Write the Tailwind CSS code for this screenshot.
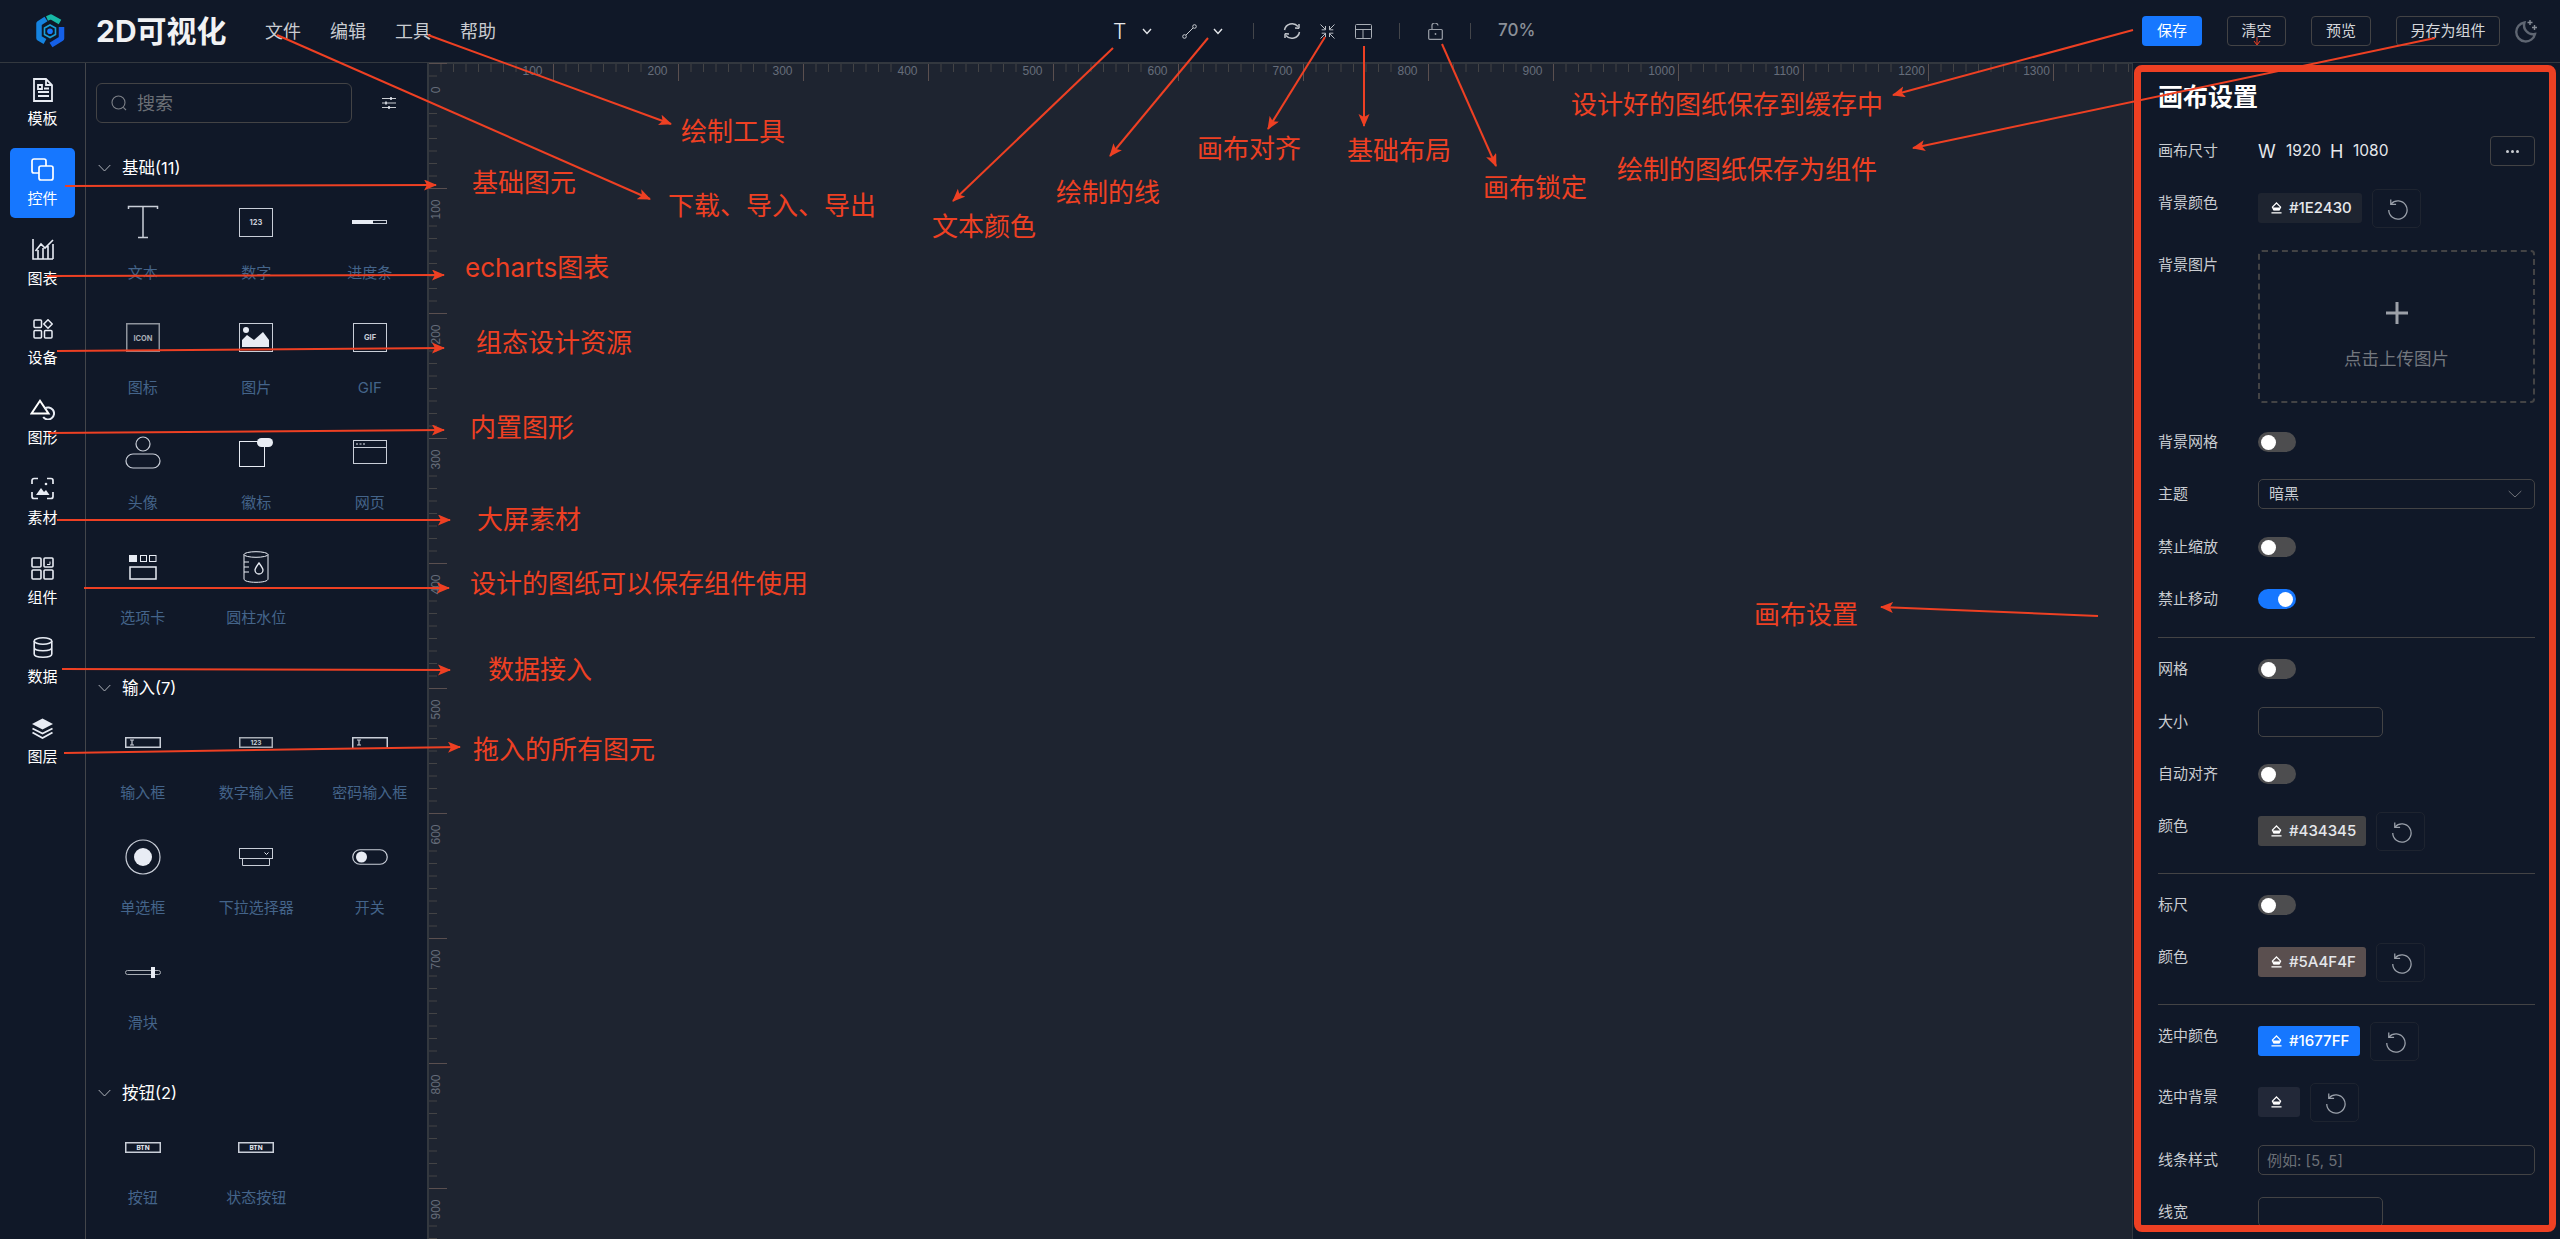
<!DOCTYPE html>
<html lang="zh-CN">
<head>
  <meta charset="UTF-8" />
  <title>2D可视化</title>
  <script src="https://cdn.jsdelivr.net/npm/@tailwindcss/browser@4"></script>
</head>
<body class="relative h-screen overflow-hidden bg-[#101828] text-white font-['Inter','Noto_Sans_CJK_SC',sans-serif]">

<!-- shared icons -->
<svg class="absolute w-0 h-0">
  <symbol id="bucket" viewBox="0 0 12 13">
    <path d="M6 1L10.500 5.500L9 8.500H3L1.500 5.500Z" fill="none" stroke="#fff" stroke-width="1.300"/>
    <path d="M2 6H10L9 9H3Z" fill="#fff"/>
    <path d="M0.500 11.800H11.500" stroke="#fff" stroke-width="1.400"/>
  </symbol>
  <symbol id="reset" viewBox="0 0 24 24">
    <path d="M5.500 6.500A10 10 0 1 1 3 13" fill="none" stroke="#9aa0aa" stroke-width="1.400"/>
    <path d="M5.200 1.500V7H11" fill="none" stroke="#9aa0aa" stroke-width="1.400"/>
  </symbol>
</svg>

<!-- HEADER -->
<header class="h-[63px] border-b border-[#33383f] flex items-center">
  <svg class="ml-[35px] w-[30px] h-[34px]" viewBox="0 0 30 34">
    <path d="M11 5L4 9.500V24L10 27.500" fill="none" stroke="#1583e0" stroke-width="5.500" stroke-linejoin="round"/>
    <path d="M12 4.500L16 2.800L25 8" fill="none" stroke="#17b8a6" stroke-width="5" stroke-linejoin="round"/>
    <path d="M26.500 13V24.500L16 31" fill="none" stroke="#1560e8" stroke-width="5.500" stroke-linejoin="round"/>
    <path d="M15 11L20.500 14V20.500L15 23.500L9.500 20.500V14Z" fill="#101828" stroke="#1a9fd8" stroke-width="1.600"/>
    <circle cx="15" cy="17.300" r="2.800" fill="#1677FF"/>
  </svg>
  <div class="ml-[31px] w-[135px] text-[30px] font-bold leading-none text-[#f1f2f4]">2D可视化</div>
  <nav class="ml-[34px] flex gap-[29px] text-[18px] text-[#c9ccd1]">
    <a>文件</a><a>编辑</a><a>工具</a><a>帮助</a>
  </nav>

  <!-- toolbar -->
  <div class="ml-[617px] flex items-center h-[16px]">
    <span class="w-[12px] text-[21px] font-light leading-none text-[#e5e7eb]">T</span>
    <svg class="ml-[17px] w-[10px] h-[7px]" viewBox="0 0 10 7"><path d="M1 1L5 5.500L9 1" fill="none" stroke="#e5e7eb" stroke-width="1.400"/></svg>
    <svg class="ml-[30px] w-[15px] h-[15px]" viewBox="0 0 15 15"><circle cx="2.500" cy="12.500" r="1.800" fill="none" stroke="#c9ccd1"/><circle cx="12.500" cy="2.500" r="1.800" fill="none" stroke="#c9ccd1"/><path d="M4 11L11 4" stroke="#c9ccd1"/></svg>
    <svg class="ml-[16px] w-[10px] h-[7px]" viewBox="0 0 10 7"><path d="M1 1L5 5.500L9 1" fill="none" stroke="#e5e7eb" stroke-width="1.400"/></svg>
    <div class="ml-[30px] w-px h-[16px] bg-[#43454a]"></div>
    <svg class="ml-[29px] w-[18px] h-[18px]" viewBox="0 0 18 18"><path d="M1.500 8A7.700 7.700 0 0 1 15 4.500M16.500 10A7.700 7.700 0 0 1 3 13.500" fill="none" stroke="#c2c6cc" stroke-width="1.500"/><path d="M16 2V6H12L16 6.500ZM2 16V12H6L2 11.500Z" fill="#c2c6cc" stroke="#c2c6cc"/></svg>
    <svg class="ml-[19px] w-[15px] h-[15px]" viewBox="0 0 15 15"><path d="M0.500 0.500L5.500 5.500M5.500 2V5.800H1.700M14.500 0.500L9.500 5.500M9.500 2V5.800H13.300M0.500 14.500L5.500 9.500M5.500 13V9.200H1.700M14.500 14.500L9.500 9.500M9.500 13V9.200H13.300" fill="none" stroke="#b8bcc3"/></svg>
    <svg class="ml-[20px] w-[17px] h-[15px]" viewBox="0 0 17 15"><rect x="0.500" y="0.500" width="16" height="14" rx="1" fill="none" stroke="#a8adb5"/><path d="M0.500 5.500H16.500M8 5.500V14.500" stroke="#a8adb5"/></svg>
    <div class="ml-[27px] w-px h-[16px] bg-[#43454a]"></div>
    <svg class="ml-[28px] w-[15px] h-[17px]" viewBox="0 0 15 17"><rect x="0.700" y="6.500" width="13.600" height="9.800" rx="1" fill="none" stroke="#9a9fa8" stroke-width="1.200"/><path d="M4 6.500V3.500A3 3 0 0 1 10 2.500" fill="none" stroke="#9a9fa8" stroke-width="1.200"/><circle cx="7.500" cy="11" r="0.900" fill="#9a9fa8"/></svg>
    <div class="ml-[27px] w-px h-[16px] bg-[#43454a]"></div>
    <span class="ml-[27px] text-[17px] font-medium text-[#8b9098]">70%</span>
  </div>

  <!-- actions -->
  <div class="absolute left-[2142px] top-[16px] flex items-center h-[30px] text-[15px] text-[#d5d7db]">
    <button class="w-[60px] h-[30px] rounded-[4px] bg-[#1677FF] text-white">保存</button>
    <button class="ml-[25px] w-[59px] h-[30px] rounded-[4px] border border-[#434345]">清空</button>
    <button class="ml-[25px] w-[60px] h-[30px] rounded-[4px] border border-[#434345]">预览</button>
    <button class="ml-[25px] w-[104px] h-[30px] rounded-[4px] border border-[#434345]">另存为组件</button>
    <svg class="ml-[14px] w-[24px] h-[24px]" viewBox="0 0 24 24"><path d="M10.500 3.500A9.500 9.500 0 1 0 21 15A9 9 0 0 1 10.500 3.500Z" fill="none" stroke="#5f6672" stroke-width="2.400"/><path d="M16 1V6M13.500 3.500H18.500M20.500 6V11M18 8.500H23" stroke="#868c96" stroke-width="1.400"/></svg>
  </div>
</header>

<main class="flex h-[1176px]">
  <!-- LEFT RAIL -->
  <aside class="w-[86px] shrink-0 border-r border-[#43454a] pt-[5px] flex flex-col gap-[9.75px] items-center text-[15px] text-white">
    <a class="w-[65px] h-[70px] flex flex-col items-center">
      <div class="h-[41px] pt-[2px] flex items-center"><svg class="w-[22px] h-[24px]" viewBox="0 0 22 24"><path d="M2 1H14L20 7V23H2Z M14 1V7H20" fill="none" stroke="#e8ecf4" stroke-width="1.800"/><path d="M6 7H10V11H6ZM6 14H17M6 18H17M12 10.500H17" fill="none" stroke="#e8ecf4" stroke-width="1.800"/></svg></div>
      <span class="leading-[20px]">模板</span>
    </a>
    <a class="w-[65px] h-[70px] rounded-[5px] bg-[#1677FF] flex flex-col items-center">
      <div class="h-[41px] pt-[2px] flex items-center"><svg class="w-[23px] h-[23px]" viewBox="0 0 23 23"><path d="M8 15H3A2 2 0 0 1 1 13V3A2 2 0 0 1 3 1H13A2 2 0 0 1 15 3V8" fill="none" stroke="#fff" stroke-width="1.700"/><path d="M10 8H20A2 2 0 0 1 22 10V20A2 2 0 0 1 20 22H10A2 2 0 0 1 8 20V10A2 2 0 0 1 10 8Z" fill="none" stroke="#fff" stroke-width="1.700"/></svg></div>
      <span class="leading-[20px]">控件</span>
    </a>
    <a class="w-[65px] h-[70px] flex flex-col items-center">
      <div class="h-[41px] pt-[2px] flex items-center"><svg class="w-[22px] h-[22px]" viewBox="0 0 22 22"><path d="M1 1V21H21M6 21V12M11 21V10M16 21V8M21 21V6M3.500 13L9 6L13 10L21 2" fill="none" stroke="#e8ecf4" stroke-width="1.600"/></svg></div>
      <span class="leading-[20px]">图表</span>
    </a>
    <a class="w-[65px] h-[70px] flex flex-col items-center">
      <div class="h-[41px] pt-[2px] flex items-center"><svg class="w-[20px] h-[20px]" viewBox="0 0 20 20"><rect x="1" y="1" width="7.500" height="7.500" rx="1" fill="none" stroke="#e8ecf4" stroke-width="1.500"/><path d="M15 0.800L19.200 5L15 9.200L10.800 5Z" fill="none" stroke="#e8ecf4" stroke-width="1.500"/><rect x="1" y="11.500" width="7.500" height="7.500" rx="1" fill="none" stroke="#e8ecf4" stroke-width="1.500"/><rect x="11.500" y="11.500" width="7.500" height="7.500" rx="1" fill="none" stroke="#e8ecf4" stroke-width="1.500"/></svg></div>
      <span class="leading-[20px]">设备</span>
    </a>
    <a class="w-[65px] h-[70px] flex flex-col items-center">
      <div class="h-[41px] pt-[3px] flex items-center"><svg class="w-[25px] h-[21px]" viewBox="0 0 25 21"><path d="M10 1.800L18.500 14.500H1.500Z" fill="none" stroke="#fff" stroke-width="2"/><path d="M14.500 9.600A6 6 0 1 1 13.200 18" fill="none" stroke="#e8ecf4" stroke-width="2"/></svg></div>
      <span class="leading-[20px]">图形</span>
    </a>
    <a class="w-[65px] h-[70px] flex flex-col items-center">
      <div class="h-[41px] pt-[2px] flex items-center"><svg class="w-[23px] h-[23px]" viewBox="0 0 23 23"><path d="M7 1.500H3A2 2 0 0 0 1 3.500V7M16 1.500H20A2 2 0 0 1 22 3.500V7M1 15V19.500A2 2 0 0 0 3 21.500H7M16 21.500H20A2 2 0 0 0 22 19.500V15" fill="none" stroke="#e8ecf4" stroke-width="1.700"/><path d="M5 18L10 11L13 15L15 13L18.500 18Z" fill="#e8ecf4"/><circle cx="15" cy="7" r="1.300" fill="#e8ecf4"/></svg></div>
      <span class="leading-[20px]">素材</span>
    </a>
    <a class="w-[65px] h-[70px] flex flex-col items-center">
      <div class="h-[41px] pt-[2px] flex items-center"><svg class="w-[23px] h-[23px]" viewBox="0 0 23 23"><rect x="1" y="1" width="9" height="9" rx="1" fill="none" stroke="#e8ecf4" stroke-width="1.600"/><rect x="13" y="1" width="9" height="9" rx="1" fill="none" stroke="#e8ecf4" stroke-width="1.600"/><rect x="1" y="13" width="9" height="9" rx="1" fill="none" stroke="#e8ecf4" stroke-width="1.600"/><rect x="13" y="13" width="9" height="9" rx="1" fill="none" stroke="#e8ecf4" stroke-width="1.600"/><path d="M16 7.500H19V4.500" fill="none" stroke="#e8ecf4"/></svg></div>
      <span class="leading-[20px]">组件</span>
    </a>
    <a class="w-[65px] h-[70px] flex flex-col items-center">
      <div class="h-[41px] pt-[2px] flex items-center"><svg class="w-[20px] h-[21px]" viewBox="0 0 20 21"><ellipse cx="10" cy="4" rx="8.800" ry="3.200" fill="none" stroke="#e8ecf4" stroke-width="1.600"/><path d="M1.200 4V17C1.200 19 5 20.200 10 20.200S18.800 19 18.800 17V4M1.200 10.500C1.200 12.500 5 13.700 10 13.700S18.800 12.500 18.800 10.500" fill="none" stroke="#e8ecf4" stroke-width="1.600"/></svg></div>
      <span class="leading-[20px]">数据</span>
    </a>
    <a class="w-[65px] h-[70px] flex flex-col items-center">
      <div class="h-[41px] pt-[3px] flex items-center"><svg class="w-[23px] h-[21px]" viewBox="0 0 23 21"><path d="M11.500 0.500L22 6L11.500 11.500L1 6Z" fill="#e8ecf4"/><path d="M1.500 10.500L11.500 15.500L21.500 10.500M1.500 14.500L11.500 20L21.500 14.500" fill="none" stroke="#e8ecf4" stroke-width="1.800"/></svg></div>
      <span class="leading-[20px]">图层</span>
    </a>
  </aside>

  <!-- COMPONENT PANEL -->
  <section class="w-[342px] shrink-0 border-r border-[#33383f] overflow-hidden">
    <div class="pl-[10px] pt-[20px] flex items-center">
      <div class="w-[256px] h-[40px] rounded-[6px] border border-[#434345] flex items-center pl-[14px] text-[18px] text-[#6b6f76]">
        <svg class="w-[16px] h-[16px]" viewBox="0 0 16 16"><circle cx="7.500" cy="7.500" r="6.500" fill="none" stroke="#7d8188" stroke-width="1.100"/><path d="M12.300 12.300L15 15" stroke="#7d8188" stroke-width="1.100"/></svg>
        <span class="ml-[10px]">搜索</span>
      </div>
      <svg class="ml-[30px] w-[14px] h-[14px]" viewBox="0 0 14 14"><path d="M0 2.500H14M0 7H14M0 11.500H14" stroke="#c9ccd1"/><path d="M9 1V4M4 5.500V8.500M7 10V13" stroke="#e8ecf4" stroke-width="1.500"/></svg>
    </div>

    <!-- 基础 -->
    <div class="mt-[30px] h-[30px] flex items-center pl-[12px] text-[16.5px] text-white">
      <svg class="w-[13px] h-[8px]" viewBox="0 0 13 8"><path d="M0.700 1L6.500 7L12.300 1" fill="none" stroke="#aeb2b9"/></svg>
      <span class="ml-[11px]">基础(11)</span>
    </div>
    <div class="grid grid-cols-[repeat(3,113.5px)] text-[15px] text-[#44648a]">
      <div class="h-[115px] pt-[11px] flex flex-col items-center">
        <div class="h-[56px] flex items-center"><svg class="w-[32px] h-[34px]" viewBox="0 0 32 34"><path d="M1.500 4V1.500H30.500V4M16 1.500V32.500M11 32.500H21" fill="none" stroke="#c9ced8" stroke-width="1.500"/></svg></div>
        <span class="mt-[13px] leading-[20px]">文本</span>
      </div>
      <div class="h-[115px] pt-[11px] flex flex-col items-center">
        <div class="h-[56px] flex items-center"><svg class="w-[34px] h-[29px]" viewBox="0 0 34 29"><rect x="0.500" y="0.500" width="33" height="28" fill="none" stroke="#c9ced8"/><text x="17" y="17" font-size="7.500" font-weight="700" text-anchor="middle" fill="#c9ced8">123</text></svg></div>
        <span class="mt-[13px] leading-[20px]">数字</span>
      </div>
      <div class="h-[115px] pt-[11px] flex flex-col items-center">
        <div class="h-[56px] flex items-center"><svg class="w-[35px] h-[4px]" viewBox="0 0 35 4"><rect x="0.500" y="0.500" width="34" height="3" fill="none" stroke="#c9ced8"/><rect width="21" height="4" fill="#e8ecf4"/></svg></div>
        <span class="mt-[13px] leading-[20px]">进度条</span>
      </div>

      <div class="h-[115px] pt-[11px] flex flex-col items-center">
        <div class="h-[56px] flex items-center"><svg class="w-[34px] h-[29px]" viewBox="0 0 34 29"><rect x="0.750" y="0.750" width="32.500" height="27.500" fill="none" stroke="#8e939c" stroke-width="1.500"/><text x="17" y="17.500" font-size="7.500" font-weight="700" text-anchor="middle" fill="#a8adb5">ICON</text></svg></div>
        <span class="mt-[13px] leading-[20px]">图标</span>
      </div>
      <div class="h-[115px] pt-[11px] flex flex-col items-center">
        <div class="h-[56px] flex items-center"><svg class="w-[34px] h-[29px]" viewBox="0 0 34 29"><rect x="0.500" y="0.500" width="33" height="28" fill="none" stroke="#c9ced8"/><circle cx="7" cy="7" r="3" fill="#e8ecf4"/><path d="M3 24V17L8 12L15 17L24 9L30 17V24Z" fill="#e8ecf4"/></svg></div>
        <span class="mt-[13px] leading-[20px]">图片</span>
      </div>
      <div class="h-[115px] pt-[11px] flex flex-col items-center">
        <div class="h-[56px] flex items-center"><svg class="w-[34px] h-[29px]" viewBox="0 0 34 29"><rect x="0.500" y="0.500" width="33" height="28" fill="none" stroke="#c9ced8"/><text x="17" y="17" font-size="7.500" font-weight="700" text-anchor="middle" fill="#c9ced8">GIF</text></svg></div>
        <span class="mt-[13px] leading-[20px]">GIF</span>
      </div>

      <div class="h-[115px] pt-[11px] flex flex-col items-center">
        <div class="h-[56px] flex items-center"><svg class="w-[36px] h-[33px]" viewBox="0 0 36 33"><circle cx="18" cy="8" r="7" fill="none" stroke="#c9ced8" stroke-width="1.200"/><rect x="1" y="18" width="34" height="14" rx="7" fill="none" stroke="#c9ced8" stroke-width="1.200"/></svg></div>
        <span class="mt-[13px] leading-[20px]">头像</span>
      </div>
      <div class="h-[115px] pt-[11px] flex flex-col items-center">
        <div class="h-[56px] flex items-center"><svg class="w-[34px] h-[29px]" viewBox="0 0 34 29"><rect x="0.500" y="3.500" width="25" height="25" fill="none" stroke="#e8ecf4"/><rect x="18" y="0" width="16" height="9" rx="4.500" fill="#e8ecf4"/></svg></div>
        <span class="mt-[13px] leading-[20px]">徽标</span>
      </div>
      <div class="h-[115px] pt-[11px] flex flex-col items-center">
        <div class="h-[56px] flex items-center"><svg class="w-[34px] h-[24px]" viewBox="0 0 34 24"><rect x="0.500" y="0.500" width="33" height="23" fill="none" stroke="#c9ced8"/><path d="M0.500 7.500H33.500" stroke="#c9ced8"/><path d="M3 4H5M6.500 4H8.500M10 4H12" stroke="#e8ecf4"/></svg></div>
        <span class="mt-[13px] leading-[20px]">网页</span>
      </div>

      <div class="h-[115px] pt-[11px] flex flex-col items-center">
        <div class="h-[56px] flex items-center"><svg class="w-[28px] h-[25px]" viewBox="0 0 28 25"><rect x="0" y="0" width="8" height="7" fill="#e8ecf4"/><rect x="11.500" y="0.500" width="6" height="6" fill="none" stroke="#e8ecf4"/><rect x="20.500" y="0.500" width="6.500" height="6" fill="none" stroke="#e8ecf4"/><rect x="1" y="12" width="26" height="12" fill="none" stroke="#e8ecf4" stroke-width="1.500"/></svg></div>
        <span class="mt-[13px] leading-[20px]">选项卡</span>
      </div>
      <div class="h-[115px] pt-[11px] flex flex-col items-center">
        <div class="h-[56px] flex items-center"><svg class="w-[26px] h-[32px]" viewBox="0 0 26 32"><ellipse cx="13" cy="3.500" rx="12" ry="2.800" fill="none" stroke="#e8ecf4"/><path d="M1 3.500V28C1 30 6 31.300 13 31.300S25 30 25 28V3.500M1 11H6M1 16H6M1 21H6" fill="none" stroke="#e8ecf4"/><path d="M16 12C13 16 12 17.500 12 19A4 4 0 0 0 20 19C20 17.500 19 16 16 12Z" fill="none" stroke="#e8ecf4" stroke-width="1.300"/></svg></div>
        <span class="mt-[13px] leading-[20px]">圆柱水位</span>
      </div>
    </div>

    <!-- 输入 -->
    <div class="mt-[30px] h-[30px] flex items-center pl-[12px] text-[16.5px] text-white">
      <svg class="w-[13px] h-[8px]" viewBox="0 0 13 8"><path d="M0.700 1L6.500 7L12.300 1" fill="none" stroke="#aeb2b9"/></svg>
      <span class="ml-[11px]">输入(7)</span>
    </div>
    <div class="grid grid-cols-[repeat(3,113.5px)] text-[15px] text-[#44648a]">
      <div class="h-[115px] pt-[11px] flex flex-col items-center">
        <div class="h-[56px] flex items-center"><svg class="w-[36px] h-[11px]" viewBox="0 0 36 11"><rect x="0.750" y="0.750" width="34.500" height="9.500" fill="none" stroke="#c9ced8" stroke-width="1.500"/><path d="M5 3H9M7 3V8M5 8H9" fill="none" stroke="#c9ced8" stroke-width="1.200"/></svg></div>
        <span class="mt-[13px] leading-[20px]">输入框</span>
      </div>
      <div class="h-[115px] pt-[11px] flex flex-col items-center">
        <div class="h-[56px] flex items-center"><svg class="w-[34px] h-[11px]" viewBox="0 0 34 11"><rect x="0.750" y="0.750" width="32.500" height="9.500" fill="none" stroke="#a8adb5" stroke-width="1.500"/><text x="17" y="8" font-size="6.500" font-weight="700" text-anchor="middle" fill="#c9ced8">123</text></svg></div>
        <span class="mt-[13px] leading-[20px]">数字输入框</span>
      </div>
      <div class="h-[115px] pt-[11px] flex flex-col items-center">
        <div class="h-[56px] flex items-center"><svg class="w-[36px] h-[11px]" viewBox="0 0 36 11"><path d="M0.750 11V0.750H35.250V11" fill="none" stroke="#c9ced8" stroke-width="1.500"/><path d="M5 3H9M7 3V8M5 8H9" fill="none" stroke="#c9ced8" stroke-width="1.200"/></svg></div>
        <span class="mt-[13px] leading-[20px]">密码输入框</span>
      </div>

      <div class="h-[115px] pt-[11px] flex flex-col items-center">
        <div class="h-[56px] flex items-center"><svg class="w-[36px] h-[36px]" viewBox="0 0 36 36"><circle cx="18" cy="18" r="17" fill="none" stroke="#c9ced8" stroke-width="1.200"/><circle cx="18" cy="18" r="9" fill="#e8ecf4"/></svg></div>
        <span class="mt-[13px] leading-[20px]">单选框</span>
      </div>
      <div class="h-[115px] pt-[11px] flex flex-col items-center">
        <div class="h-[56px] flex items-center"><svg class="w-[34px] h-[18px]" viewBox="0 0 34 18"><rect x="0.500" y="0.500" width="33" height="10" fill="none" stroke="#c9ced8"/><path d="M3.500 10.500V17.500H30.500V10.500" fill="none" stroke="#c9ced8"/><path d="M25.500 4.500L27.500 6.500L29.500 4.500" fill="none" stroke="#e8ecf4"/></svg></div>
        <span class="mt-[13px] leading-[20px]">下拉选择器</span>
      </div>
      <div class="h-[115px] pt-[11px] flex flex-col items-center">
        <div class="h-[56px] flex items-center"><svg class="w-[36px] h-[16px]" viewBox="0 0 36 16"><rect x="0.750" y="0.750" width="34.500" height="14.500" rx="7.250" fill="none" stroke="#c9ced8" stroke-width="1.200"/><circle cx="9.500" cy="8" r="5.500" fill="#e8ecf4"/></svg></div>
        <span class="mt-[13px] leading-[20px]">开关</span>
      </div>

      <div class="h-[115px] pt-[11px] flex flex-col items-center">
        <div class="h-[56px] flex items-center"><svg class="w-[36px] h-[11px]" viewBox="0 0 36 11"><rect x="0.500" y="3.500" width="35" height="4" rx="2" fill="none" stroke="#a8adb5"/><rect x="26" y="0" width="4" height="11" fill="#e8ecf4"/></svg></div>
        <span class="mt-[13px] leading-[20px]">滑块</span>
      </div>
    </div>

    <!-- 按钮 -->
    <div class="mt-[30px] h-[30px] flex items-center pl-[12px] text-[16.5px] text-white">
      <svg class="w-[13px] h-[8px]" viewBox="0 0 13 8"><path d="M0.700 1L6.500 7L12.300 1" fill="none" stroke="#aeb2b9"/></svg>
      <span class="ml-[11px]">按钮(2)</span>
    </div>
    <div class="grid grid-cols-[repeat(3,113.5px)] text-[15px] text-[#44648a]">
      <div class="h-[115px] pt-[11px] flex flex-col items-center">
        <div class="h-[56px] flex items-center"><svg class="w-[36px] h-[11px]" viewBox="0 0 36 11"><rect x="0.750" y="0.750" width="34.500" height="9.500" fill="none" stroke="#c9ced8" stroke-width="1.500"/><text x="18" y="8" font-size="6.500" font-weight="700" text-anchor="middle" fill="#e8ecf4">BTN</text></svg></div>
        <span class="mt-[13px] leading-[20px]">按钮</span>
      </div>
      <div class="h-[115px] pt-[11px] flex flex-col items-center">
        <div class="h-[56px] flex items-center"><svg class="w-[36px] h-[11px]" viewBox="0 0 36 11"><rect x="0.750" y="0.750" width="34.500" height="9.500" fill="none" stroke="#c9ced8" stroke-width="1.500"/><text x="18" y="8" font-size="6.500" font-weight="700" text-anchor="middle" fill="#e8ecf4">BTN</text></svg></div>
        <span class="mt-[13px] leading-[20px]">状态按钮</span>
      </div>
    </div>
  </section>

  <!-- CANVAS + RULERS -->
  <section class="relative flex-1 bg-[#1E2430] overflow-hidden">
    <svg id="rulers" class="absolute inset-0 w-full h-full"></svg>
  </section>

  <!-- SETTINGS PANEL -->
  <section class="w-[428px] shrink-0 border-l border-[#33383f] pl-[25px] pr-[25px] pt-[18px] text-[15px] text-[#c9ccd1] overflow-hidden">
    <h2 class="h-[34px] flex items-center text-[25px] font-bold text-white">画布设置</h2>

    <div class="mt-[21px] h-[30px] flex items-center">
      <span class="w-[100px]">画布尺寸</span>
      <div class="flex-1 flex items-center text-[15.5px] text-[#e5e7eb]">
        <span class="w-[28px] text-[18px]">W</span><span class="w-[44px]">1920</span><span class="w-[23px] text-[18px]">H</span><span>1080</span>
      </div>
      <button class="w-[45px] h-[30px] rounded-[4px] border border-[#434345] flex items-center justify-center gap-[2px]">
        <i class="w-[3px] h-[3px] rounded-full bg-[#c9ccd1]"></i><i class="w-[3px] h-[3px] rounded-full bg-[#c9ccd1]"></i><i class="w-[3px] h-[3px] rounded-full bg-[#c9ccd1]"></i>
      </button>
    </div>

    <div class="mt-[23px] h-[39px] flex items-start">
      <span class="w-[100px] h-[28px] flex items-center">背景颜色</span>
      <div class="mt-[4px] w-[104px] h-[30px] rounded-[3px] bg-[#1E2430] text-[#e5e7eb] flex items-center pl-[13px] gap-[7px] font-medium">
        <svg class="w-[11px] h-[12px]"><use href="#bucket"/></svg>#1E2430
      </div>
      <button class="ml-[10px] w-[49px] h-[39px] rounded-[5px] border border-[#1E2430] flex items-center justify-center"><svg class="w-[22px] h-[22px]"><use href="#reset"/></svg></button>
    </div>

    <div class="mt-[22px] flex items-start">
      <span class="w-[100px] h-[30px] flex items-center">背景图片</span>
      <div class="w-[277px] h-[153px] rounded-[4px] border-2 border-dashed border-[#434345] flex flex-col items-center">
        <svg class="mt-[50px] w-[22px] h-[22px]" viewBox="0 0 22 22"><path d="M11 0V22M0 11H22" stroke="#9ca0a8" stroke-width="3"/></svg>
        <span class="mt-[23px] text-[17.5px] leading-[24px] text-[#73777e]">点击上传图片</span>
      </div>
    </div>

    <div class="mt-[29px] h-[20px] flex items-center">
      <span class="w-[100px]">背景网格</span>
      <div class="w-[38px] h-[20px] rounded-full bg-[#4d4d4f] flex items-center pl-[3px]"><i class="w-[15px] h-[15px] rounded-full bg-white"></i></div>
    </div>

    <div class="mt-[27px] h-[30px] flex items-center">
      <span class="w-[100px]">主题</span>
      <div class="w-[277px] h-[30px] rounded-[5px] border border-[#434345] flex items-center justify-between pl-[10px] pr-[12px]">
        <span>暗黑</span>
        <svg class="w-[14px] h-[8px]" viewBox="0 0 14 8"><path d="M0.700 1L7 7L13.300 1" fill="none" stroke="#6f7278"/></svg>
      </div>
    </div>

    <div class="mt-[28px] h-[20px] flex items-center">
      <span class="w-[100px]">禁止缩放</span>
      <div class="w-[38px] h-[20px] rounded-full bg-[#4d4d4f] flex items-center pl-[3px]"><i class="w-[15px] h-[15px] rounded-full bg-white"></i></div>
    </div>

    <div class="mt-[32px] h-[20px] flex items-center">
      <span class="w-[100px]">禁止移动</span>
      <div class="w-[38px] h-[20px] rounded-full bg-[#1677FF] flex items-center justify-end pr-[3px]"><i class="w-[15px] h-[15px] rounded-full bg-white"></i></div>
    </div>

    <hr class="mt-[28px] border-[#434345]" />

    <div class="mt-[21px] h-[20px] flex items-center">
      <span class="w-[100px]">网格</span>
      <div class="w-[38px] h-[20px] rounded-full bg-[#4d4d4f] flex items-center pl-[3px]"><i class="w-[15px] h-[15px] rounded-full bg-white"></i></div>
    </div>

    <div class="mt-[28px] h-[30px] flex items-center">
      <span class="w-[100px]">大小</span>
      <div class="w-[125px] h-[30px] rounded-[5px] border border-[#434345]"></div>
    </div>

    <div class="mt-[27px] h-[20px] flex items-center">
      <span class="w-[100px]">自动对齐</span>
      <div class="w-[38px] h-[20px] rounded-full bg-[#4d4d4f] flex items-center pl-[3px]"><i class="w-[15px] h-[15px] rounded-full bg-white"></i></div>
    </div>

    <div class="mt-[28px] h-[39px] flex items-start">
      <span class="w-[100px] h-[28px] flex items-center">颜色</span>
      <div class="mt-[4px] w-[108px] h-[30px] rounded-[3px] bg-[#434345] text-[#e5e7eb] flex items-center pl-[13px] gap-[7px] font-medium">
        <svg class="w-[11px] h-[12px]"><use href="#bucket"/></svg>#434345
      </div>
      <button class="ml-[10px] w-[49px] h-[39px] rounded-[5px] border border-[#1E2430] flex items-center justify-center"><svg class="w-[22px] h-[22px]"><use href="#reset"/></svg></button>
    </div>

    <hr class="mt-[22px] border-[#434345]" />

    <div class="mt-[21px] h-[20px] flex items-center">
      <span class="w-[100px]">标尺</span>
      <div class="w-[38px] h-[20px] rounded-full bg-[#4d4d4f] flex items-center pl-[3px]"><i class="w-[15px] h-[15px] rounded-full bg-white"></i></div>
    </div>

    <div class="mt-[28px] h-[39px] flex items-start">
      <span class="w-[100px] h-[28px] flex items-center">颜色</span>
      <div class="mt-[4px] w-[108px] h-[30px] rounded-[3px] bg-[#5A4F4F] text-[#e5e7eb] flex items-center pl-[13px] gap-[7px] font-medium">
        <svg class="w-[11px] h-[12px]"><use href="#bucket"/></svg>#5A4F4F
      </div>
      <button class="ml-[10px] w-[49px] h-[39px] rounded-[5px] border border-[#1E2430] flex items-center justify-center"><svg class="w-[22px] h-[22px]"><use href="#reset"/></svg></button>
    </div>

    <hr class="mt-[22px] border-[#434345]" />

    <div class="mt-[17px] h-[39px] flex items-start">
      <span class="w-[100px] h-[28px] flex items-center">选中颜色</span>
      <div class="mt-[4px] w-[102px] h-[30px] rounded-[3px] bg-[#1677FF] text-white flex items-center pl-[13px] gap-[7px] font-medium">
        <svg class="w-[11px] h-[12px]"><use href="#bucket"/></svg>#1677FF
      </div>
      <button class="ml-[10px] w-[49px] h-[39px] rounded-[5px] border border-[#1E2430] flex items-center justify-center"><svg class="w-[22px] h-[22px]"><use href="#reset"/></svg></button>
    </div>

    <div class="mt-[22px] h-[39px] flex items-start">
      <span class="w-[100px] h-[28px] flex items-center">选中背景</span>
      <div class="mt-[4px] w-[42px] h-[30px] rounded-[3px] bg-[#222838] flex items-center pl-[13px]">
        <svg class="w-[11px] h-[12px]"><use href="#bucket"/></svg>
      </div>
      <button class="ml-[10px] w-[49px] h-[39px] rounded-[5px] border border-[#1E2430] flex items-center justify-center"><svg class="w-[22px] h-[22px]"><use href="#reset"/></svg></button>
    </div>

    <div class="mt-[23px] h-[30px] flex items-center">
      <span class="w-[100px]">线条样式</span>
      <input placeholder="例如: [5, 5]" class="w-[277px] h-[30px] rounded-[5px] border border-[#434345] pl-[8px] outline-none placeholder-[#6b6f76]" />
    </div>

    <div class="mt-[22px] h-[30px] flex items-center">
      <span class="w-[100px]">线宽</span>
      <div class="w-[125px] h-[30px] rounded-[5px] border border-[#434345]"></div>
    </div>
  </section>
</main>

<!-- ANNOTATIONS: red callouts drawn over the screenshot -->
<div class="absolute left-[2134px] top-[65px] w-[422px] h-[1167px] rounded-[8px] border-[7px] border-[#EE4023]"></div>
<svg id="arrows" class="absolute inset-0 w-full h-full pointer-events-none"></svg>
<div class="absolute inset-0 pointer-events-none text-[26px] leading-[36px] text-[#EE4023]">
  <span class="absolute left-[681px] top-[114px]">绘制工具</span>
  <span class="absolute left-[472px] top-[165px]">基础图元</span>
  <span class="absolute left-[668px] top-[188px]">下载、导入、导出</span>
  <span class="absolute left-[465px] top-[250px]">echarts图表</span>
  <span class="absolute left-[476px] top-[325px]">组态设计资源</span>
  <span class="absolute left-[470px] top-[410px]">内置图形</span>
  <span class="absolute left-[477px] top-[502px]">大屏素材</span>
  <span class="absolute left-[470px] top-[566px]">设计的图纸可以保存组件使用</span>
  <span class="absolute left-[488px] top-[652px]">数据接入</span>
  <span class="absolute left-[473px] top-[732px]">拖入的所有图元</span>
  <span class="absolute left-[932px] top-[209px]">文本颜色</span>
  <span class="absolute left-[1056px] top-[175px]">绘制的线</span>
  <span class="absolute left-[1197px] top-[131px]">画布对齐</span>
  <span class="absolute left-[1347px] top-[133px]">基础布局</span>
  <span class="absolute left-[1483px] top-[170px]">画布锁定</span>
  <span class="absolute left-[1571px] top-[87px]">设计好的图纸保存到缓存中</span>
  <span class="absolute left-[1617px] top-[152px]">绘制的图纸保存为组件</span>
  <span class="absolute left-[1754px] top-[597px]">画布设置</span>
</div>

<script>
  const NS = 'http://www.w3.org/2000/svg';
  function el(parent, name, attrs, text) {
    const node = document.createElementNS(NS, name);
    for (const k in attrs) node.setAttribute(k, attrs[k]);
    if (text !== undefined) node.textContent = text;
    parent.appendChild(node);
    return node;
  }

  // rulers: 10 units = 12.5px, origin at the canvas corner
  const rulers = document.getElementById('rulers');
  const step = 12.5;
  for (let i = 0; i <= 136; i++) {
    const x = i * step + 0.5, major = i % 10 === 0;
    if (i % 10 === 9 || i % 10 === 8) continue; // hidden behind the label
    el(rulers, 'line', { x1: x, x2: x, y1: 0, y2: major ? 18 : 9, stroke: major ? '#5A4F4F' : '#434345' });
    if (major && i > 0) {
      const label = i * 10;
      el(rulers, 'text', { x: x - (label >= 1000 ? 17 : 21), y: 12, 'text-anchor': 'middle', 'font-size': 12, 'font-family': 'Liberation Sans', fill: '#666d7a' }, label);
    }
  }
  el(rulers, 'line', { x1: 0, x2: 1705, y1: 0.5, y2: 0.5, stroke: '#33383f' });
  for (let i = 0; i <= 94; i++) {
    const y = i * step + 0.5, major = i % 10 === 0;
    if (i % 10 === 1 && i > 1 || i % 10 === 2 && i > 2 || i === 2 || i === 3) continue;
    el(rulers, 'line', { x1: 0, x2: major ? 19 : 9, y1: y, y2: y, stroke: major ? '#5A4F4F' : '#434345' });
    if (major) {
      const cy = i === 0 ? 27 : y + 21;
      el(rulers, 'text', { x: 8, y: cy, 'text-anchor': 'middle', 'dominant-baseline': 'central', 'font-size': 12, 'font-family': 'Liberation Sans', fill: '#666d7a', transform: 'rotate(-90 8 ' + cy + ')' }, i * 10);
    }
  }
  el(rulers, 'line', { x1: 0.5, x2: 0.5, y1: 0, y2: 1176, stroke: '#33383f' });

  // callout arrows: [fromX, fromY, toX, toY]
  const arrows = document.getElementById('arrows');
  const lines = [
    [277, 35, 650, 199], [428, 35, 671, 124],
    [65, 186, 436, 185], [47, 276, 444, 275], [57, 351, 444, 348], [48, 433, 444, 430],
    [57, 520, 450, 520], [84, 588, 449, 588], [62, 669, 450, 670], [64, 753, 460, 747],
    [1113, 48, 953, 201], [1208, 38, 1110, 156], [1325, 37, 1268, 129], [1364, 46, 1364, 126],
    [1442, 44, 1496, 166], [2133, 30, 1893, 95], [2435, 38, 1913, 148], [2098, 616, 1881, 607]
  ];
  const defs = el(arrows, 'defs', {});
  const marker = el(defs, 'marker', { id: 'head', markerWidth: 14, markerHeight: 12, refX: 12, refY: 5.5, orient: 'auto', markerUnits: 'userSpaceOnUse' });
  el(marker, 'path', { d: 'M0 0L13 5.5L0 11L3 5.5Z', fill: '#EE4023' });
  lines.forEach(l => el(arrows, 'line', { x1: l[0], y1: l[1], x2: l[2], y2: l[3], stroke: '#EE4023', 'stroke-width': 2, 'marker-end': 'url(#head)' }));
  el(arrows, 'path', { d: 'M2257 37V44M2254 41L2257 45L2260 41', fill: 'none', stroke: '#EE4023', 'stroke-width': 1 });
</script>
</body>
</html>
